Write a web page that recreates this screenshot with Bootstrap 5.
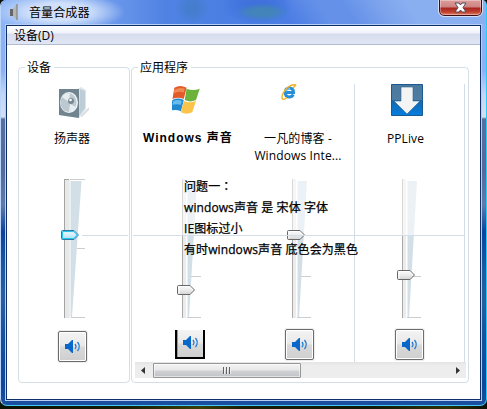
<!DOCTYPE html>
<html lang="zh-CN">
<head>
<meta charset="utf-8">
<meta name="viewport" content="width=device-width, initial-scale=1">
<title>音量合成器</title>
<link href="https://cdn.jsdelivr.net/npm/bootstrap@5.3.0/dist/css/bootstrap.min.css" rel="stylesheet">
<style>
body{width:487px;height:409px;overflow:hidden;background:linear-gradient(90deg,#0b1204,#141b06 25%,#3a3f08 41%,#171d07 50%,#10180a 75%,#2c3108 92%,#0a1006);font:12px/17px "Open Sans","Noto Sans CJK SC",sans-serif;color:#000}
svg{display:block;flex:none}
.aero{width:487px;height:406px;border-radius:6px 5px 7px 7px;overflow:hidden;border-right:1px solid #1fd0fa;border-bottom:1px solid #45c8f5;border-left:1px solid #b9d5fa;
 background:linear-gradient(180deg,#8eb4f5 0,#8cb0f3 70px,#c3d6f8 95px,#d3dff2 117px,#56709f 119px,#536a9b 170px,#5f7bab 205px,#0c429d 232px,#1c5aa3 270px,#285e9f 300px,#1550a0 340px,#0f469a 385px,#1b4f9f 405px)}
.titlebar{height:24px;padding-left:8px;background:
 radial-gradient(ellipse 17px 16px at 191px 8px,#3d7bb880 0 30%,#3d7bb800 100%),
 radial-gradient(ellipse 27px 9px at 261px 12px,#4389b0cc 0 40%,#4389b000 100%),
 radial-gradient(ellipse 36px 20px at 256px 5px,#3f70dc 0 25%,#3f70dc00 100%),
 radial-gradient(ellipse 66px 19px at 58px 12px,#d0e0fb 0 45%,#d0e0fb00 100%),
 linear-gradient(90deg,#8fb6f5 0,#83abf0 70px,#6c98eb 110px,#4f82e3 165px,#4a7fe3 230px,#4b7de400 285px),
 linear-gradient(55deg,#4b7de4 0 58%,#6591e8 66% 71%,#7ca3ec 78%,#8aaff1 84%)}
.caption{font-size:12.1px;margin-left:10px}
.close-box{width:43px;height:16px;margin-right:4px;border:1px solid #3f0e12;border-top:0;border-radius:0 0 5px 5px;outline:1px solid #d3ddf6;background:linear-gradient(#dc9e9b 0,#cd8380 7px,#a82520 8px,#c1402f 12px,#df8069 100%);box-shadow:inset 0 0 0 1px #ffffff55}
.client{width:475px;height:375px;margin:1px 0 0 5px;border:1px solid #102f68;box-shadow:0 0 0 1px #b8cff5;background:#fff}
.menu-strip{height:19px;padding-left:7px;line-height:19px;background:linear-gradient(#fff 0,#eff2f9 7px,#d6ddee 8px,#dfe5f3 17px,#dfe5f3 18px,#b2bdcf 18px)}
.mixer{padding:22px 0 0 11px;gap:1px}
.group-frame{height:316px;border:1px solid #d3dee5;border-radius:4px}
.g-device{width:112px}.g-apps{width:338px}
.group-name{line-height:18px;height:16px;margin:-9px 0 0 6px;padding:0 3px 0 2px;background:#fff;align-self:flex-start}
.channel{padding-top:11px}
.channels{padding:9px 0 0 3px;height:287px}
.app{width:110px;height:278px}
.app-line{border-right:1px solid #d3dee8}
.pic{height:46px}
.channel .pic{height:44px}
.ie-pic{padding-right:21px}
.pp-pic{padding-right:6px}
.flag-pic{padding-left:37px}
.caption-app{height:48px;text-align:center;white-space:nowrap}
.channel .caption-app{padding-right:4px}
.shift-left{padding-right:3px;letter-spacing:.12px}
.raster{font:bold 12px/17px "Liberation Sans","Noto Sans CJK SC",sans-serif;letter-spacing:.98px;margin-left:8px}
.fader{margin-left:42px}
.device-fader{margin-left:42px}
.mute-row{padding-top:9px}
.mute-row-device{padding:11px 3px 0 0}
.mute{width:29px;height:31px;border:1px solid #6c6c6c;border-radius:2px;background:linear-gradient(#f4f4f4,#e8e8e8 48%,#d9d9d9 52%,#cfcfcf);box-shadow:inset 0 0 0 1px #fff,0 0 0 1px #eee}
.mute-black{width:30px;height:29px;margin-top:1px;border:2px solid #000;border-top:0;border-radius:0;box-shadow:inset 1px 0 #999}
.scroller{width:331px;height:16px;margin-left:3px;background:linear-gradient(#e4e4e4,#ededed 4px,#ededed)}
.grip{width:148px;height:15px;border:1px solid #979797;border-radius:1px;background:linear-gradient(#f3f3f3 0,#e8e8e9 6px,#d0d1d4 7px,#c1c2c5 100%);box-shadow:inset 0 0 0 1px #ffffff88}
.guide{height:1px;background:#d3dee8;top:235px}
.guide-a{left:82px;width:46px}.guide-b{left:133px;width:332px}
.remarks{left:184px;top:175px;line-height:21px;white-space:nowrap;letter-spacing:.09px;-webkit-text-stroke:.25px #000}
.wide-colon{font-family:"Noto Sans CJK TC",sans-serif}
</style>
</head>
<body>
<svg width="0" height="0" class="position-absolute">
 <defs>
  <linearGradient id="thumbFill" x2="0" y2="1"><stop stop-color="#fdfdfd"/><stop offset=".5" stop-color="#ececec"/><stop offset="1" stop-color="#d4d4d4"/></linearGradient>
  <linearGradient id="hotFill" x2="0" y2="1"><stop stop-color="#e6f7fe"/><stop offset=".5" stop-color="#d2effb"/><stop offset="1" stop-color="#a1dcf3"/></linearGradient>
  <g id="sound"><path d="M1 6h3l4-4h1v13H8l-4-4H1z" fill="#0967ca"/><path d="M11 6q2 2.500 0 5M13.500 4q3.500 4.500 0 9" fill="none" stroke="#247bd4" stroke-width="1.300"/></g>
  <g id="thumb"><path d="M1.500.5H13l4.500 4.500L13 9.500H1.500q-1 0-1-1v-7q0-1 1-1z" fill="url(#thumbFill)" stroke="#686868"/><path d="M2 8.500V1.500h10.600L16 5" fill="none" stroke="#fff"/></g>
  <g id="appTrack">
   <path d="M5.500 1v139" stroke="#a9a9a9"/><path d="M6 1h3v139H6z" fill="#ececec"/><path d="M10.500 3H20l-8 137h-1.500z" fill="#d3dfe6"/>
   <path d="M14 98.500h10M10 139.500h14" stroke="#cdcdcd"/><path d="M4 0h20v57H4z" fill="#fff" opacity=".55"/>
  </g>
 </defs>
</svg>
<main class="aero">
 <header class="titlebar d-flex align-items-center">
  <svg width="10" height="18" viewBox="0 0 10 18"><path d="M1 6h3v7H1z" fill="#666"/><path d="M4 6l4-5v16l-4-4z" fill="#b5b5b5"/><path d="M8 1v16" stroke="#777"/></svg>
  <span class="caption">音量合成器</span>
  <div class="close-box ms-auto align-self-start d-flex justify-content-center align-items-center">
   <svg width="13" height="11" viewBox="0 0 13 11"><path d="M1 1h4l1.500 2L8 1h4L9 5.500l3 4.500H8L6.500 8 5 10H1l3-4.500z" fill="#fff" stroke="#4c4b58"/></svg>
  </div>
 </header>
 <section class="client">
  <nav class="menu-strip">设备(D)</nav>
  <div class="mixer d-flex">
   <div class="group-frame g-device d-flex flex-column">
    <div class="group-name">设备</div>
    <div class="channel">
     <div class="pic d-flex justify-content-center">
      <svg width="32" height="34" viewBox="0 0 32 34"><path d="M22 30l9-9v3l-7 7z" fill="#ddd"/><path d="M1 4l18-1 4-2 5 3v19l-7 9-20-3z" fill="#dbe6ec"/><path d="M22 3l5 2v17l-6 8z" fill="#bdcdd7"/><path d="M1 3h20v29L1 29z" fill="#70838f"/><ellipse cx="11" cy="16.500" rx="9" ry="10.500" fill="#edf3f6"/><ellipse cx="10.500" cy="16.500" rx="8" ry="9.500" fill="#bcc9d1"/><path d="M11 16L4 11q3-5 8-3.500zM12 18l6 3q-2 5-7 5z" fill="#e6edf1"/><circle cx="13" cy="15" r="3" fill="#788791"/><circle cx="12.500" cy="14" r="1.300" fill="#fff"/></svg>
     </div>
     <div class="caption-app">扬声器</div>
     <svg class="device-fader" width="26" height="142" viewBox="0 0 26 142"><path d="M3.500 1v139M3 1.500h5" stroke="#a4a4a4"/><path d="M4 2h4v138H4z" fill="#e7e9e9"/><path d="M8.500 2v138" stroke="#eee"/><path d="M9.500 3h11L11 139H9.500z" fill="#d3dfe6"/><path d="M16 70.500h8M10 139.500h14M9 1.500h15" stroke="#ccc"/><g transform="translate(0 52)"><path d="M1.500.5H13l4.500 4.500L13 9.500H1.500q-1 0-1-1v-7q0-1 1-1z" fill="url(#hotFill)" stroke="#35799b"/><path d="M1.500 8.500v-7h11.200L16.200 5l-3.500 3.500z" fill="none" stroke="#23c5f5"/></g></svg>
     <div class="mute-row-device d-flex justify-content-center"><div class="mute"><svg width="27" height="28" viewBox="-5 -6 27 28"><use href="#sound"/></svg></div></div>
    </div>
   </div>
   <div class="group-frame g-apps d-flex flex-column">
    <div class="group-name">应用程序</div>
    <div class="channels d-flex">
     <div class="app">
      <div class="pic flag-pic"><svg width="32" height="32" viewBox="0 0 34 34"><g transform="translate(-2.500 0)"><path d="M5 4q6-4 13 0l-3 12q-6-3-12 0z" fill="#e35b26"/><path d="M18 5q7 3 14 0l-4 12q-6 3-12 0z" fill="#6db33b"/><path d="M3 17q6-3 12 0l-3 12q-6-3-12 0z" fill="#2189d2"/><path d="M15 18q6 3 13 0l-4 12q-6 3-12 0z" fill="#fac44b"/><path d="M5 6q6-3 11-1l-1 4q-5-2-11 1z" fill="#f08a55"/><path d="M4 18q5-2 9 0l-1 4q-4-1-9 0z" fill="#68bcec"/></g></svg></div>
      <div class="caption-app d-flex"><div class="raster">Windows 声音</div></div>
      <svg class="fader" width="26" height="142" viewBox="0 0 26 142"><use href="#appTrack"/><use href="#thumb" y="107"/></svg>
      <div class="mute-row d-flex ps-3"><div class="mute mute-black ms-4"><svg width="26" height="26" viewBox="-5 -4 26 26"><use href="#sound"/></svg></div></div>
     </div>
     <div class="app app-line">
      <div class="pic ie-pic d-flex justify-content-center"><svg width="16" height="17" viewBox="0 0 16 17"><path d="M12.300 10.500q-1.300 2.500-4 2.500-4 0-4-4.500t4-4.500q4.200 0 4.200 4.500H5" fill="none" stroke="#258fd8" stroke-width="3"/><path d="M5 7.500q1-3 4-3" fill="none" stroke="#83d4f7"/><path d="M12 4q4-4 2-3-3-1-8 3Q1 9 1 14q1 3 5-.5" fill="none" stroke="#eeb52c" stroke-width="1.500"/></svg></div>
      <div class="caption-app shift-left"><span>一凡的博客 -</span><br>Windows Inte...</div>
      <svg class="fader" width="26" height="142" viewBox="0 0 26 142"><use href="#appTrack"/><use href="#thumb" y="52"/></svg>
      <div class="mute-row d-flex justify-content-center"><div class="mute"><svg width="27" height="28" viewBox="-5 -6 27 28"><use href="#sound"/></svg></div></div>
     </div>
     <div class="app app-line">
      <div class="pic pp-pic d-flex justify-content-center"><svg width="32" height="32" viewBox="0 0 32 32"><defs><linearGradient id="tile" x2="0" y2="1"><stop stop-color="#4b799d"/><stop offset=".5" stop-color="#4f7ca2"/><stop offset=".52" stop-color="#1767ab"/><stop offset="1" stop-color="#057ee0"/></linearGradient></defs><path d="M.5.5h31v31H.5z" fill="url(#tile)" stroke="#1a5a91"/><path d="M10 3h12v14h7L16 30 3 17h7z" fill="#f4f4f4" stroke="#2c6290" stroke-width=".6"/></svg></div>
      <div class="caption-app shift-left pe-2">PPLive</div>
      <svg class="fader" width="26" height="142" viewBox="0 0 26 142"><use href="#appTrack"/><use href="#thumb" y="92"/></svg>
      <div class="mute-row d-flex justify-content-center"><div class="mute"><svg width="27" height="28" viewBox="-5 -6 27 28"><use href="#sound"/></svg></div></div>
     </div>
    </div>
    <div class="scroller d-flex align-items-center">
     <svg width="18" height="15" viewBox="0 0 18 15"><path d="M10 4v7L6 7.500z" fill="#333"/></svg>
     <div class="grip d-flex justify-content-center align-items-center"><svg width="10" height="7"><path d="M1.500 0v7M4.500 0v7M7.500 0v7" stroke="#606060"/><path d="M2.500 0v7M5.500 0v7M8.500 0v7" stroke="#eee"/></svg></div>
     <svg class="ms-auto" width="16" height="15" viewBox="0 0 16 15"><path d="M6 4v7l4-3.500z" fill="#333"/></svg>
    </div>
   </div>
  </div>
 </section>
</main>
<div class="guide guide-a position-absolute"></div>
<div class="guide guide-b position-absolute"></div>
<div class="remarks position-absolute">问题一<span class="wide-colon" lang="zh-TW">：</span><br>windows声音 是 宋体 字体<br>IE图标过小<br>有时windows声音 底色会为黑色</div>
</body>
</html>
